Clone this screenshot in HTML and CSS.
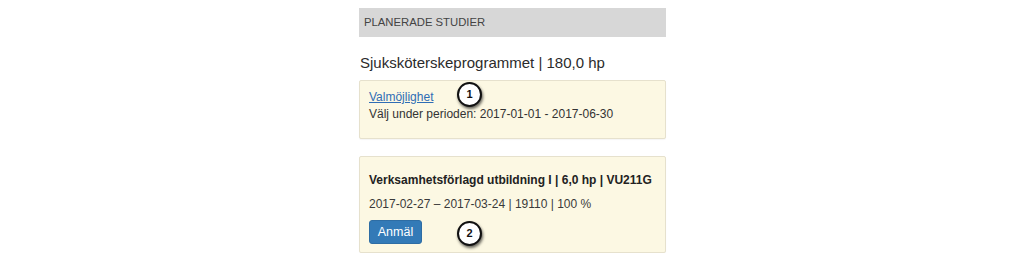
FILE: index.html
```html
<!DOCTYPE html>
<html lang="sv">
<head>
<meta charset="utf-8">
<title>Planerade studier</title>
<link rel="stylesheet" href="styles.css">
</head>
<body>
<main class="column">
  <div class="section-head">PLANERADE STUDIER</div>
  <h2 class="program">Sjuksköterskeprogrammet | 180,0 hp</h2>
  <div class="card card-choice">
    <a class="link" href="#">Valmöjlighet</a>
    <div class="line">Välj under perioden: 2017-01-01 - 2017-06-30</div>
    <span class="marker marker-1">1</span>
  </div>
  <div class="card card-course">
    <div class="course-title">Verksamhetsförlagd utbildning I | 6,0 hp | VU211G</div>
    <div class="course-meta">2017-02-27 – 2017-03-24 | 19110 | 100 %</div>
    <button class="btn" type="button">Anmäl</button>
    <span class="marker marker-2">2</span>
  </div>
</main>
</body>
</html>
```
FILE: styles.css
```css
html, body {
  margin: 0;
  padding: 0;
  background: #ffffff;
}
body {
  font-family: "Liberation Sans", Arial, sans-serif;
  color: #333333;
  font-size: 12px;
  line-height: 17px;
}
.column {
  width: 307px;
  margin-left: 359px;
  padding-top: 8px;
  display: flex;
  flex-direction: column;
}
.section-head {
  height: 29px;
  line-height: 29px;
  background: #d7d7d7;
  color: #444444;
  font-size: 11.3px;
  padding-left: 5px;
}
.program {
  margin: 17px 0 8px 1px;
  font-size: 15px;
  line-height: 18px;
  font-weight: normal;
  color: #2b2b2b;
}
.card {
  position: relative;
  background: #fcf8e3;
  border: 1px solid #e6e1cd;
  border-radius: 2px;
  box-shadow: 0 1px 1px rgba(0,0,0,0.04);
  padding: 0 9px;
  display: flex;
  flex-direction: column;
  align-items: flex-start;
}
.card-choice {
  padding-top: 8px;
  padding-bottom: 15px;
}
.link {
  color: #2f6db5;
  text-decoration: underline;
}
.card-course {
  margin-top: 17px;
  padding-top: 15px;
  padding-bottom: 8px;
}
.course-title {
  font-weight: bold;
  color: #222222;
}
.course-meta {
  margin-top: 7px;
  color: #3a3a3a;
}
.btn {
  margin-top: 7px;
  height: 24px;
  width: 53px;
  padding: 0;
  font-family: "Liberation Sans", Arial, sans-serif;
  font-size: 12.5px;
  color: #ffffff;
  background: #337ab7;
  border: 1px solid #2e6da4;
  border-radius: 3px;
}
.marker {
  position: absolute;
  left: 97px;
  width: 21px;
  height: 21px;
  border: 2px solid #111111;
  border-radius: 50%;
  background: #ffffff;
  box-shadow: 1px 2px 3px rgba(0,0,0,0.6);
  font-size: 11px;
  font-weight: bold;
  line-height: 21px;
  text-align: center;
  color: #111111;
}
.marker-1 {
  top: 1px;
}
.marker-2 {
  top: 64px;
}
```
